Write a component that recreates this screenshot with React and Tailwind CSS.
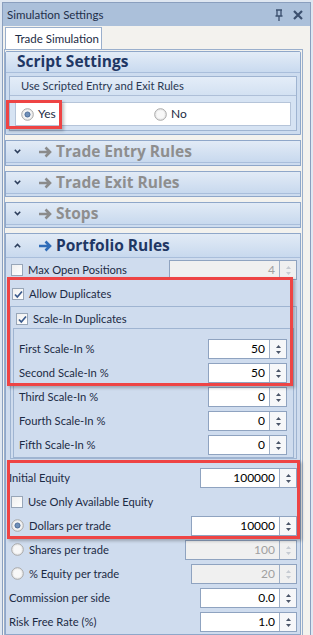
import * as React from "react";

const font = { fontFamily: "Lato, 'Noto Sans', sans-serif" };
const head = { fontFamily: "'Open Sans', sans-serif" };

export default function App() {
  return (
    <div className="w-[313px] h-[635px] overflow-hidden bg-[#c9d6e6] text-[11.2px] text-[#1c2b45]" style={font}>
      <div className="h-full border-[2px] border-[#dfe7f1] border-b-0 flex flex-col">
        <div className="flex-1 flex flex-col border border-[#8a9fbe] border-b-0">
          {/* title bar */}
          <div className="h-[23px] bg-[#abc0da] flex items-center pl-[4px] pr-[6px] shrink-0">
            <span className="flex-1 text-[11.5px] text-[#1f2f4a]">Simulation Settings</span>
            <Pin />
            <Close />
          </div>
          <div className="flex-1 bg-[#f3f2ee] flex flex-col pl-[1px] pr-[7px]">
            {/* tab strip */}
            <div className="h-[23px] pl-[1px] pt-[1px] flex shrink-0">
              <div className="w-[97px] h-[22px] bg-white border border-[#9aafcc] border-b-0 flex items-center pl-[9px] whitespace-nowrap text-[11.5px]">
                Trade Simulation
              </div>
            </div>
            <div className="flex-1 border-l border-t border-r border-[#9aafcc] pt-[1px] pr-[1px] flex flex-col gap-[5px] relative">
              <ScriptSettings />
              <Collapsed title="Trade Entry Rules" />
              <Collapsed title="Trade Exit Rules" />
              <Collapsed title="Stops" />
              <Portfolio />
            </div>
          </div>
        </div>
      </div>
    </div>
  );
}

function Pin() {
  return (
    <svg width="14" height="14" viewBox="0 0 14 14" className="mr-[6px]">
      <path d="M4 2h6M5 2v6M9 2v6M3.5 8h7M7 8v5" stroke="#3b4f6e" strokeWidth="1.3" fill="none" />
    </svg>
  );
}
function Close() {
  return (
    <svg width="12" height="12" viewBox="0 0 12 12">
      <path d="M2 2l8 8M10 2l-8 8" stroke="#3b4f6e" strokeWidth="2.2" />
    </svg>
  );
}

function ScriptSettings() {
  return (
    <div className="border border-[#8fa7c9] rounded-t-[2px] bg-[#cddcef] h-[84px] shrink-0 flex flex-col">
      <div className="h-[21px] bg-gradient-to-b from-[#e3ecf7] to-[#c9daef] border-b border-[#a9bedb] flex items-center shrink-0">
        <span className="pl-[11px] text-[15.5px] font-bold text-[#1f3764]" style={head}>Script Settings</span>
      </div>
      <div className="mx-[3px] mt-[3px] border border-[#9fb4d1] h-[55px] bg-[#d6e3f3] flex flex-col">
        <div className="h-[19px] border-b border-[#aebfd8] bg-gradient-to-b from-[#e4edf8] to-[#d3e1f2] flex items-center pl-[11px] text-[#2a3852]">
          Use Scripted Entry and Exit Rules
        </div>
        <div className="mx-[5px] mt-[6px] h-[24px] bg-white border border-[#b5c4d9] flex items-center relative">
          <div className="w-[138px] flex items-center pl-[5px] gap-[4px]">
            <Radio on /> <span className="text-[12px]">Yes</span>
          </div>
          <div className="flex items-center gap-[4px]">
            <Radio /> <span className="text-[12px]">No</span>
          </div>
          <div className="absolute left-[-10px] top-[-3px] w-[56px] h-[29px] border-[3px] border-[#ee4444] shadow-[2px_2px_3px_rgba(0,0,0,0.25)]" />
        </div>
      </div>
    </div>
  );
}

function Chevron({ up }) {
  return (
    <svg width="7" height="5" viewBox="0 0 7 5" className="ml-[8px] mr-[18px]">
      <path d={up ? "M0.8 4.2l2.7-2.7 2.7 2.7" : "M0.8 0.8l2.7 2.7 2.7-2.7"} stroke="#2c3e5c" strokeWidth="1.6" fill="none" />
    </svg>
  );
}
function Arrow({ color }) {
  return (
    <svg width="13" height="12" viewBox="0 0 13 12" className="mr-[4px]">
      <path d="M0 6h10.5M6.5 1.5L11 6l-4.5 4.5" stroke={color} strokeWidth="2.6" fill="none" />
    </svg>
  );
}

function Collapsed({ title }) {
  return (
    <div className="border border-[#8fa7c9] h-[26px] shrink-0 flex flex-col bg-[#cddcef]">
      <div className="h-[22px] bg-gradient-to-b from-[#e2ebf6] to-[#c8d9ee] border-b border-[#a9bedb] flex items-center">
        <Chevron />
        <Arrow color="#8b8b8b" />
        <span className="text-[15.5px] font-bold text-[#8e8e8e]" style={head}>{title}</span>
      </div>
    </div>
  );
}

function Check({ on }) {
  return (
    <div className="w-[12px] h-[12px] border border-[#98a6b8] bg-gradient-to-br from-[#efefef] to-[#ffffff] flex items-center justify-center shrink-0">
      {on && (
        <svg width="9" height="9" viewBox="0 0 9 9">
          <path d="M1 4.5l2.3 2.5L8 1.5" stroke="#3b5a8c" strokeWidth="1.7" fill="none" />
        </svg>
      )}
    </div>
  );
}
function Radio({ on }) {
  return (
    <svg width="13" height="13" viewBox="0 0 13 13" className="shrink-0">
      <circle cx="6.5" cy="6.5" r="5.8" fill="#ececec" stroke="#a8a8a8" />
      <circle cx="6.5" cy="6.5" r="4" fill="#f8f8f8" />
      {on && <circle cx="6.5" cy="6.5" r="2.6" fill="#6f8fb8" stroke="#3d5f8f" strokeWidth="0.8" />}
    </svg>
  );
}

function Spin({ disabled }) {
  const c = disabled ? "#c6cbd2" : "#4a5568";
  return (
    <div className={`w-[17px] h-full border-l border-[#9fb0c8] flex flex-col items-center justify-center gap-[3px] ${disabled ? "bg-[#f0f0f0]" : "bg-[#f6f7f9]"}`}>
      <svg width="5" height="3" viewBox="0 0 5 3"><path d="M0 3L2.5 0 5 3z" fill={c} /></svg>
      <svg width="5" height="3" viewBox="0 0 5 3"><path d="M0 0L2.5 3 5 0z" fill={c} /></svg>
    </div>
  );
}

function Num({ value, w, disabled }) {
  return (
    <div className={`${w} h-[20px] border border-[#8fa3c0] flex shrink-0 ${disabled ? "bg-[#f0f0f0]" : "bg-white"}`}>
      <div className={`flex-1 flex items-center justify-end pr-[4px] text-[12px] ${disabled ? "text-[#a0a0a0]" : "text-black"}`}>{value}</div>
      <Spin disabled={disabled} />
    </div>
  );
}

function Row({ children, input, pl }) {
  return (
    <div className={`h-[24px] flex items-center justify-between ${pl} pr-[3px]`}>
      <div className="flex items-center gap-[5px]">{children}</div>
      {input}
    </div>
  );
}

function Portfolio() {
  return (
    <div className="border border-[#8fa7c9] flex-1 flex flex-col bg-[#cfdcee] relative">
      <div className="h-[24px] bg-gradient-to-b from-[#e2ebf6] to-[#c8d9ee] border-b border-[#a9bedb] flex items-center shrink-0">
        <Chevron up />
        <Arrow color="#2f6cb8" />
        <span className="text-[15.5px] font-bold text-[#1f3764]" style={head}>Portfolio Rules</span>
      </div>
      <div className="pl-[3px] flex flex-col">
        <div className="h-[24px] flex items-center justify-between pl-[2px] pr-[3px]">
          <div className="flex items-center gap-[5px]"><Check /> <span>Max Open Positions</span></div>
          <Num value="4" w="w-[128px]" disabled />
        </div>
        <div className="h-[24px] flex items-center gap-[5px] pl-[3px]">
          <Check on /> <span>Allow Duplicates</span>
        </div>
        <div className="ml-[1px] mr-[3px] border border-[#9fb4d1] flex flex-col">
          <div className="h-[21px] pt-[3px] flex items-center gap-[5px] pl-[5px]">
            <Check on /> <span>Scale-In Duplicates</span>
          </div>
          <div className="mx-[2px] border border-[#9fb4d1] pt-[8px] flex flex-col">
            {[
              ["First Scale-In %", "50"],
              ["Second Scale-In %", "50"],
              ["Third Scale-In %", "0"],
              ["Fourth Scale-In %", "0"],
              ["Fifth Scale-In %", "0"],
            ].map(([l, v]) => (
              <div key={l} className="h-[24px] flex items-center justify-between pl-[5px] pr-[6px]">
                <span>{l}</span>
                <Num value={v} w="w-[79px]" />
              </div>
            ))}
          </div>
        </div>
        <div className="pt-[7px] flex flex-col">
          <Row pl="pl-0" input={<Num value="100000" w="w-[97px]" />}>
            <span>Initial Equity</span>
          </Row>
          <Row pl="pl-[2px]" input={null}>
            <Check /> <span>Use Only Available Equity</span>
          </Row>
          <Row pl="pl-[2px]" input={<Num value="10000" w="w-[106px]" />}>
            <Radio on /> <span>Dollars per trade</span>
          </Row>
          <Row pl="pl-[2px]" input={<Num value="100" w="w-[112px]" disabled />}>
            <Radio /> <span>Shares per trade</span>
          </Row>
          <Row pl="pl-[2px]" input={<Num value="20" w="w-[106px]" disabled />}>
            <Radio /> <span>% Equity per trade</span>
          </Row>
          <Row pl="pl-0" input={<Num value="0.0" w="w-[97px]" />}>
            <span>Commission per side</span>
          </Row>
          <Row pl="pl-0" input={<Num value="1.0" w="w-[97px]" />}>
            <span>Risk Free Rate (%)</span>
          </Row>
        </div>
      </div>
      <div className="absolute left-[1px] top-[43px] w-[286px] h-[109px] border-[3px] border-[#ee4444] shadow-[2px_2px_3px_rgba(0,0,0,0.25)] pointer-events-none" />
      <div className="absolute left-[1px] top-[226px] w-[293px] h-[79px] border-[3px] border-[#ee4444] shadow-[2px_2px_3px_rgba(0,0,0,0.25)] pointer-events-none" />
    </div>
  );
}
